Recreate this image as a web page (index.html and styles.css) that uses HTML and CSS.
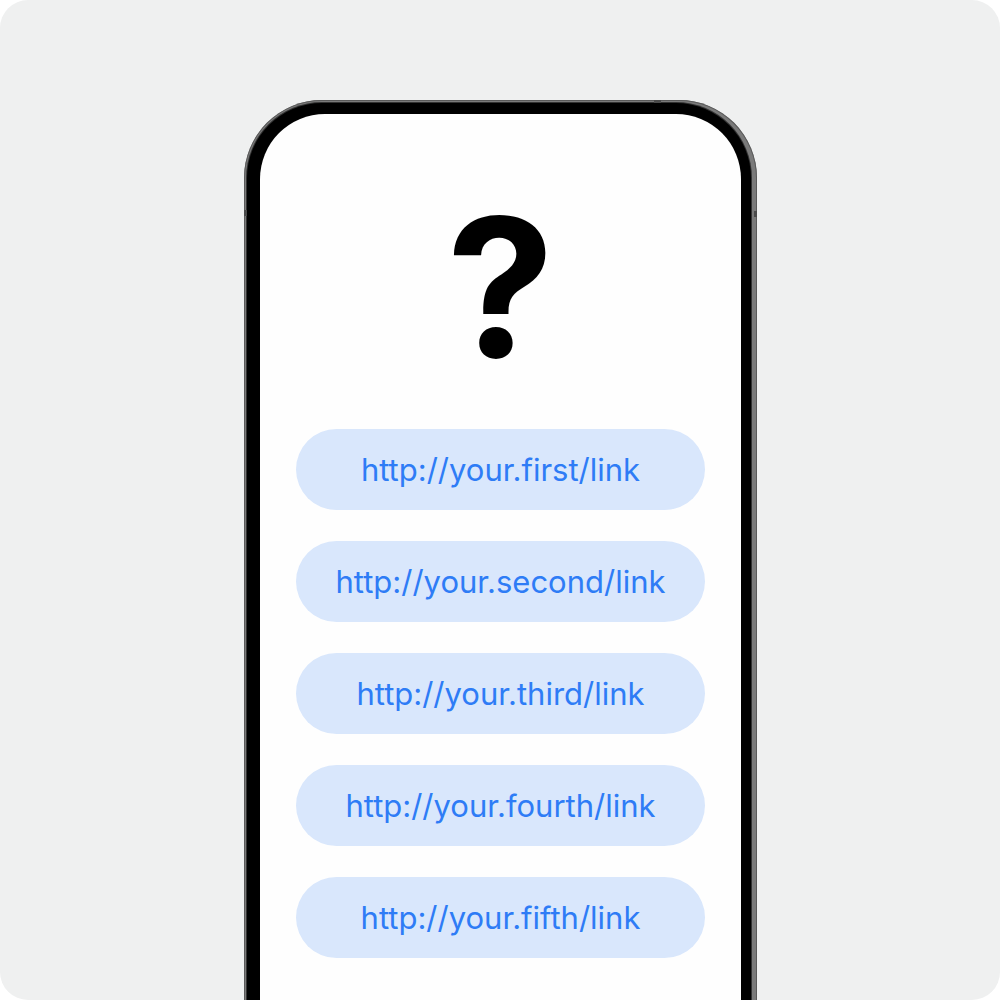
FILE: index.html
```html
<!DOCTYPE html>
<html>
<head>
<meta charset="utf-8">
<link rel="stylesheet" href="styles.css">
</head>
<body>
<div class="card">
  <div class="phone">
    <span class="btn-mark btn-left"></span>
    <span class="btn-mark btn-right"></span>
    <span class="btn-mark btn-top"></span>
    <div class="bezel">
      <div class="screen">
        <div class="qmark">?</div>
        <div class="links">
          <a class="link">http://your.first/link</a>
          <a class="link">http://your.second/link</a>
          <a class="link">http://your.third/link</a>
          <a class="link">http://your.fourth/link</a>
          <a class="link">http://your.fifth/link</a>
        </div>
      </div>
    </div>
  </div>
</div>
</body>
</html>
```
FILE: styles.css
```css
html, body {
  margin: 0;
  padding: 0;
  background: #ffffff;
}
.card {
  width: 1000px;
  height: 1000px;
  background: #eff0f0;
  border-radius: 28px;
  overflow: hidden;
  display: flex;
  flex-direction: column;
  align-items: center;
  padding-top: 100px;
  box-sizing: border-box;
  padding-left: 1px;
}
.phone {
  position: relative;
  width: 513px;
  height: 1000px;
  flex-shrink: 0;
  box-sizing: border-box;
  border-radius: 78px;
  background: #7a7a7a;
  box-shadow: inset 0 0 0 1px #5a5a5a;
  padding: 3px 6px 0 3px;
}
.bezel {
  height: 100%;
  background: #000;
  border-radius: 75px;
  padding: 11px 10px 0 13px;
  box-sizing: border-box;
  box-shadow: 0 0 0 1px #333;
}
.screen {
  height: 100%;
  background: #fefefe;
  border-radius: 65px;
  display: flex;
  flex-direction: column;
  align-items: center;
}
.btn-mark {
  position: absolute;
  background: #4a4a4a;
}
.btn-left {
  left: 0;
  top: 110px;
  width: 3px;
  height: 6px;
}
.btn-right {
  right: 0;
  top: 111px;
  width: 3px;
  height: 6px;
}
.btn-top {
  top: 0;
  left: 410px;
  width: 7px;
  height: 3px;
}
.qmark {
  font-family: Inter, "Liberation Sans", sans-serif;
  font-weight: 700;
  font-size: 193px;
  line-height: 193px;
  height: 193px;
  color: #000;
  margin-top: 77px;
}
.links {
  margin-top: 45px;
  display: flex;
  flex-direction: column;
  gap: 31px;
}
.link {
  width: 409px;
  height: 81px;
  border-radius: 41px;
  background: #d9e7fc;
  color: #2e7cf6;
  font-family: Inter, "Noto Sans", sans-serif;
  font-size: 31px;
  display: flex;
  align-items: center;
  justify-content: center;
  text-decoration: none;
}
```
